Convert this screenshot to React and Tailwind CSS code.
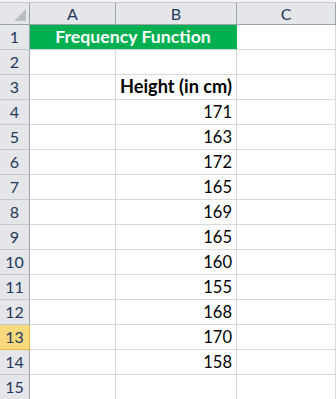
const heights = [171, 163, 172, 165, 169, 165, 160, 155, 168, 170, 158];

const font = { fontFamily: 'Lato, "Open Sans", sans-serif' };

function RowHead({ n, active }) {
  return (
    <div
      className={
        "h-[25px] flex items-center justify-center border-b border-r text-[16px] text-[#1e395b] " +
        (active
          ? "bg-[#f9d97e] border-b-[#e9b948] border-r-[#e9b948]"
          : "bg-[#e4e6e9] border-b-[#c3c7cc] border-r-[#9da3ab]")
      }
    >
      {n}
    </div>
  );
}

function Cell({ children, className = "" }) {
  return (
    <div className={"h-[25px] border-b border-r border-[#d9d9d9] flex items-center text-[16.5px] text-black " + className}>
      {children}
    </div>
  );
}

export default function App() {
  const rows = [];
  for (let i = 1; i <= 15; i++) {
    let b = null, bClass = "";
    if (i === 3) { b = "Height (in cm)"; bClass = "justify-end pr-[4px] font-bold text-[18.2px]"; }
    if (i >= 4 && i <= 14) { b = heights[i - 4]; bClass = "justify-end pr-[4px]"; }
    rows.push(
      <div key={i} className="contents">
        <RowHead n={i} active={i === 13} />
        {i === 1 ? (
          <div className="col-span-2 h-[25px] border-b border-r border-b-[#d9d9d9] border-r-[#00b050] bg-[#00b050] flex items-center justify-center text-white font-bold text-[17.7px]">
            Frequency Function
          </div>
        ) : (
          <>
            <Cell />
            <Cell className={bClass}>{b}</Cell>
          </>
        )}
        <Cell />
      </div>
    );
  }

  return (
    <div className="w-[336px] h-[399px] overflow-hidden bg-white" style={font}>
      <div className="h-[3px] bg-[#f2f2f2] border-b border-[#c6c9cd]" />
      <div className="grid grid-cols-[30px_86px_121px_1fr]">
        <div className="h-[22px] bg-[#e4e6e9] border-b border-r border-b-[#9da3ab] border-r-[#9da3ab] relative">
          <svg className="absolute right-[3px] bottom-[3px]" width="12" height="12" viewBox="0 0 12 12">
            <polygon points="12,0 12,12 0,12" fill="#b9bcc0" />
          </svg>
        </div>
        {["A", "B", "C"].map((c) => (
          <div
            key={c}
            className="h-[22px] bg-[#e4e6e9] border-b border-r border-b-[#9da3ab] border-r-[#9da3ab] flex items-center justify-center text-[16px] text-[#1e395b]"
          >
            {c}
          </div>
        ))}
        {rows}
      </div>
    </div>
  );
}
